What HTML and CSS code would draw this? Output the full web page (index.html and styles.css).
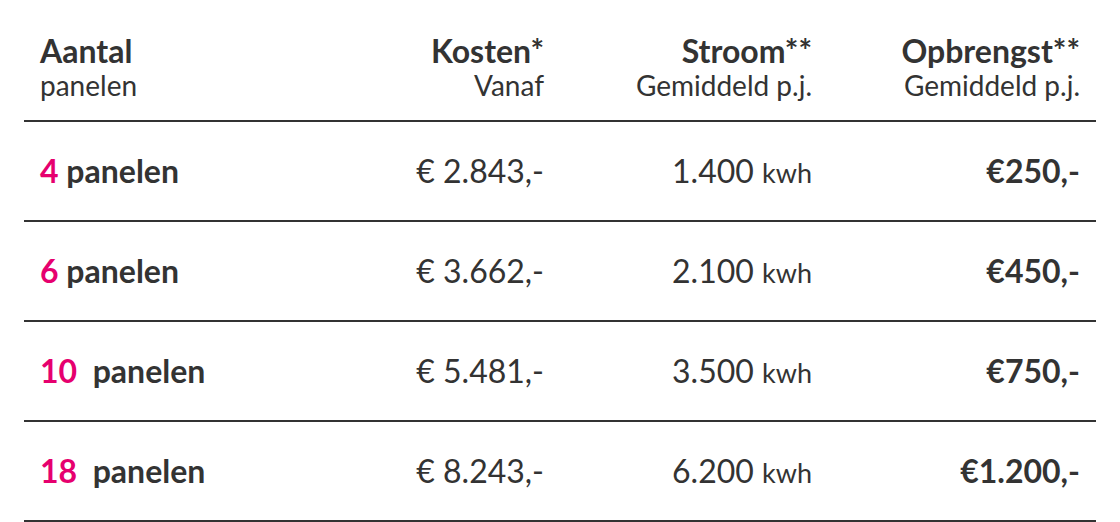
FILE: index.html
```html
<!DOCTYPE html>
<html lang="nl">
<head>
<meta charset="utf-8">
<title>Zonnepanelen</title>
<link rel="stylesheet" href="styles.css">
</head>
<body>
<div class="wrap">
<table class="prices">
  <thead>
    <tr>
      <th class="left"><span class="h">Aantal</span><span class="sub">panelen</span></th>
      <th><span class="h">Kosten*</span><span class="sub">Vanaf</span></th>
      <th><span class="h">Stroom**</span><span class="sub">Gemiddeld p.j.</span></th>
      <th><span class="h">Opbrengst**</span><span class="sub">Gemiddeld p.j.</span></th>
    </tr>
  </thead>
  <tbody>
    <tr>
      <td class="left name"><span class="num">4</span> panelen</td>
      <td>€ 2.843,-</td>
      <td>1.400 <span class="unit">kwh</span></td>
      <td class="total">€250,-</td>
    </tr>
    <tr>
      <td class="left name"><span class="num">6</span> panelen</td>
      <td>€ 3.662,-</td>
      <td>2.100 <span class="unit">kwh</span></td>
      <td class="total">€450,-</td>
    </tr>
    <tr>
      <td class="left name"><span class="num">10</span>&nbsp; panelen</td>
      <td>€ 5.481,-</td>
      <td>3.500 <span class="unit">kwh</span></td>
      <td class="total">€750,-</td>
    </tr>
    <tr>
      <td class="left name"><span class="num">18</span>&nbsp; panelen</td>
      <td>€ 8.243,-</td>
      <td>6.200 <span class="unit">kwh</span></td>
      <td class="total">€1.200,-</td>
    </tr>
  </tbody>
</table>
</div>
</body>
</html>
```
FILE: styles.css
```css
html, body {
  margin: 0;
  padding: 0;
  background: #fff;
}
body {
  font-family: Lato, "Open Sans", sans-serif;
  color: #333;
}
.wrap {
  padding: 16px 24px 0 24px;
}
.prices {
  width: 1072px;
  border-collapse: collapse;
  table-layout: fixed;
}
.prices th,
.prices td {
  width: 25%;
  text-align: right;
  padding: 0 16px;
}
.prices th {
  font-weight: normal;
  padding-top: 16px;
  padding-bottom: 19px;
  vertical-align: top;
  border-bottom: 2px solid #333;
}
.prices .left {
  text-align: left;
}
.h {
  display: block;
  font-size: 32px;
  font-weight: 700;
  line-height: 38px;
}
.sub {
  display: block;
  font-size: 28px;
  line-height: 31px;
}
.prices td {
  font-size: 32px;
  line-height: 38px;
  height: 38px;
  padding-top: 30px;
  padding-bottom: 30px;
  vertical-align: middle;
  border-bottom: 2px solid #333;
  white-space: nowrap;
}
.prices td.name,
.prices td.total {
  font-weight: 700;
}
.num {
  color: #e6006e;
}
.unit {
  font-size: 27px;
  line-height: 1;
}
```
